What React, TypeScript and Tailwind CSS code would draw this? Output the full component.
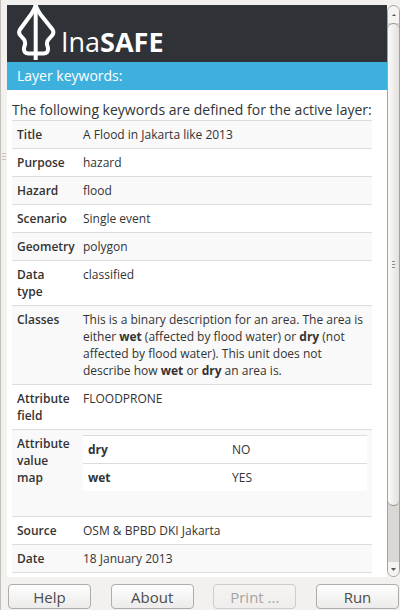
import type { ReactNode } from 'react';

type Keyword = { label: string; value: ReactNode };

function ValueMap() {
  return (
    <table className="mb-5 w-full table-fixed border-collapse bg-white">
      <colgroup>
        <col className="w-[144px]" />
        <col />
      </colgroup>
      <tbody>
        {[['dry', 'NO'], ['wet', 'YES']].map(([name, value]) => (
          <tr key={name} className="border-t border-[#dddddd]">
            <th scope="row" className="p-[5px] text-left align-top font-bold">{name}</th>
            <td className="p-[5px] align-top">{value}</td>
          </tr>
        ))}
      </tbody>
    </table>
  );
}

const keywords: Keyword[] = [
  { label: 'Title', value: 'A Flood in Jakarta like 2013' },
  { label: 'Purpose', value: 'hazard' },
  { label: 'Hazard', value: 'flood' },
  { label: 'Scenario', value: 'Single event' },
  { label: 'Geometry', value: 'polygon' },
  { label: 'Data type', value: 'classified' },
  {
    label: 'Classes',
    value: (
      <>
        This is a binary description for an area. The area is either <b>wet</b> (affected by flood
        water) or <b>dry</b> (not affected by flood water). This unit does not describe how{' '}
        <b>wet</b> or <b>dry</b> an area is.
      </>
    ),
  },
  { label: 'Attribute field', value: 'FLOODPRONE' },
  { label: 'Attribute value map', value: <ValueMap /> },
  { label: 'Source', value: 'OSM & BPBD DKI Jakarta' },
  { label: 'Date', value: '18 January 2013' },
];

function Logo() {
  return (
    <svg className="h-[57px] w-10 shrink-0" viewBox="0 0 40 57" fill="none" stroke="#ffffff" strokeLinejoin="round">
      <path
        strokeWidth="4"
        d="M18.700 0.500C17.500 4 16 6.500 14 9.500L3 24.500Q1 27.500 3.500 30.500L7 34.500Q8.500 36.500 8 39.500L7 43Q6.500 48.500 11.500 48.500H26.500Q31.500 48.500 31 43L30 39.500Q29.500 36.500 31.500 34.500L35 30.500Q37.500 27.500 35.500 24.500L23.500 9.500C21.500 6.500 20 4 18.700 0.500Z"
      />
      <path strokeWidth="4" d="M18.700 0V55" />
    </svg>
  );
}

function Grip({ className }: { className: string }) {
  return (
    <span className={`flex flex-col gap-[2px] ${className}`}>
      <span className="h-px bg-current" />
      <span className="h-px bg-current" />
      <span className="h-px bg-current" />
    </span>
  );
}

function ScrollBar() {
  return (
    <div className="flex w-[13px] shrink-0 flex-col rounded-full border border-[#a5a29d] bg-[#dad8d5]">
      <button aria-label="Scroll up" className="flex h-[17px] shrink-0 items-center justify-center rounded-t-full bg-[#f4f3f2]">
        <svg className="h-[2px] w-1" viewBox="0 0 4 2"><path d="M0 2L2 0L4 2Z" fill="#555555" /></svg>
      </button>
      <div className="flex min-h-0 flex-1 flex-col pb-[56px]">
        <div className="flex flex-1 items-center justify-center rounded-full border-y border-[#95918c] bg-linear-to-r from-[#fbfbfb] to-[#e3e1de]">
          <Grip className="w-[3px] text-[#8f8c88]" />
        </div>
      </div>
      <button aria-label="Scroll down" className="flex h-[14px] shrink-0 items-center justify-center rounded-b-full bg-[#f4f3f2]">
        <svg className="h-[3px] w-[5px]" viewBox="0 0 5 3"><path d="M0 0H5L2.500 3Z" fill="#555555" /></svg>
      </button>
    </div>
  );
}

function DockButton({ children, disabled }: { children: ReactNode; disabled?: boolean }) {
  return (
    <button
      disabled={disabled}
      className="h-[25px] w-[83px] rounded-[4px] border border-[#b0aca7] bg-linear-to-b from-[#fefefe] to-[#ecebea] text-[15px] leading-[22px] text-[#4c4c4c] disabled:border-[#cfccc9] disabled:from-[#f5f4f3] disabled:to-[#efeeed] disabled:text-[#a5a3a1]"
    >
      {children}
    </button>
  );
}

export default function App() {
  return (
    <div className="flex h-screen flex-col border-l border-[#c3bfba] bg-[#f2f1f0] pt-[5px] font-['Open_Sans','Noto_Sans',sans-serif] text-[#333333]">
      <div className="flex min-h-0 flex-1">
        <div className="flex w-[6px] shrink-0 items-center pb-[270px]">
          <Grip className="ml-px w-1 text-[#c8c5c1]" />
        </div>
        <main className="min-w-0 flex-1 overflow-hidden bg-white">
          <header className="flex h-[57px] items-end bg-[#2f3237] pl-[10px] text-white">
            <Logo />
            <h1 className="pb-[5px] pl-1 text-[27px] leading-[30px] font-medium">
              Ina<b>SAFE</b>
            </h1>
          </header>
          <h2 className="bg-[#3eb0de] px-[10px] text-sm leading-7 text-white">Layer keywords:</h2>
          <div className="pt-[10px] pr-[15px] pl-[5px]">
            <p className="text-sm leading-5 whitespace-nowrap">
              The following keywords are defined for the active layer:
            </p>
            <table className="w-full table-fixed border-collapse border-b border-[#dddddd] text-xs leading-[17px]">
              <colgroup>
                <col className="w-[66px]" />
                <col />
              </colgroup>
              <tbody>
                {keywords.map(({ label, value }) => (
                  <tr key={label} className="border-t border-[#dddddd] odd:bg-[#f9f9f9]">
                    <th scope="row" className="p-[5px] text-left align-top font-semibold">{label}</th>
                    <td className="p-[5px] align-top">{value}</td>
                  </tr>
                ))}
              </tbody>
            </table>
          </div>
        </main>
        <ScrollBar />
      </div>
      <footer className="flex shrink-0 justify-between pt-[7px] pr-px pb-px pl-[7px]">
        <DockButton>Help</DockButton>
        <DockButton>About</DockButton>
        <DockButton disabled>Print ...</DockButton>
        <DockButton>Run</DockButton>
      </footer>
    </div>
  );
}
